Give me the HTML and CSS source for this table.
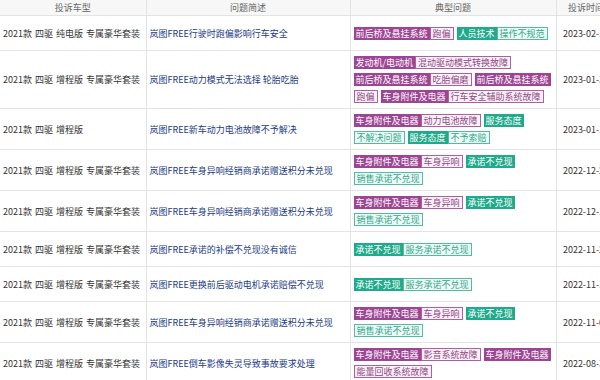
FILE: index.html
```html
<!DOCTYPE html>
<html lang="zh-CN">
<head>
<meta charset="utf-8">
<title>投诉列表</title>
<link rel="stylesheet" href="styles.css">
</head>
<body>
<table class="list">
  <colgroup>
    <col class="c-model"><col class="c-title"><col class="c-issue"><col class="c-date">
  </colgroup>
  <thead>
    <tr><th>投诉车型</th><th>问题简述</th><th>典型问题</th><th>投诉时间</th></tr>
  </thead>
  <tbody>
    <tr>
      <td class="model">2021款 四驱 纯电版 专属豪华套装</td>
      <td class="title">岚图FREE行驶时跑偏影响行车安全</td>
      <td class="issues"><div class="tags"><span class="tag pf">前后桥及悬挂系统</span><span class="tag po">跑偏</span><span class="tag tf">人员技术</span><span class="tag to">操作不规范</span></div></td>
      <td class="date">2023-02-13</td>
    </tr>
    <tr>
      <td class="model">2021款 四驱 增程版 专属豪华套装</td>
      <td class="title">岚图FREE动力模式无法选择 轮胎吃胎</td>
      <td class="issues"><div class="tags"><span class="tag pf">发动机/电动机</span><span class="tag po">混动驱动模式转换故障</span><span class="tag pf">前后桥及悬挂系统</span><span class="tag po">吃胎偏磨</span><span class="tag pf">前后桥及悬挂系统</span><span class="tag po">跑偏</span><span class="tag pf">车身附件及电器</span><span class="tag po">行车安全辅助系统故障</span></div></td>
      <td class="date">2023-01-30</td>
    </tr>
    <tr>
      <td class="model">2021款 四驱 增程版</td>
      <td class="title">岚图FREE新车动力电池故障不予解决</td>
      <td class="issues"><div class="tags"><span class="tag pf">车身附件及电器</span><span class="tag po">动力电池故障</span><span class="tag tf">服务态度</span><span class="tag to">不解决问题</span><span class="tag tf">服务态度</span><span class="tag to">不予索赔</span></div></td>
      <td class="date">2023-01-16</td>
    </tr>
    <tr>
      <td class="model">2021款 四驱 增程版 专属豪华套装</td>
      <td class="title">岚图FREE车身异响经销商承诺赠送积分未兑现</td>
      <td class="issues"><div class="tags"><span class="tag pf">车身附件及电器</span><span class="tag po">车身异响</span><span class="tag tf">承诺不兑现</span><span class="tag to">销售承诺不兑现</span></div></td>
      <td class="date">2022-12-26</td>
    </tr>
    <tr>
      <td class="model">2021款 四驱 增程版 专属豪华套装</td>
      <td class="title">岚图FREE车身异响经销商承诺赠送积分未兑现</td>
      <td class="issues"><div class="tags"><span class="tag pf">车身附件及电器</span><span class="tag po">车身异响</span><span class="tag tf">承诺不兑现</span><span class="tag to">销售承诺不兑现</span></div></td>
      <td class="date">2022-12-19</td>
    </tr>
    <tr>
      <td class="model">2021款 四驱 增程版 专属豪华套装</td>
      <td class="title">岚图FREE承诺的补偿不兑现没有诚信</td>
      <td class="issues"><div class="tags"><span class="tag tf">承诺不兑现</span><span class="tag to">服务承诺不兑现</span></div></td>
      <td class="date">2022-11-28</td>
    </tr>
    <tr>
      <td class="model">2021款 四驱 增程版 专属豪华套装</td>
      <td class="title">岚图FREE更换前后驱动电机承诺赔偿不兑现</td>
      <td class="issues"><div class="tags"><span class="tag tf">承诺不兑现</span><span class="tag to">服务承诺不兑现</span></div></td>
      <td class="date">2022-11-17</td>
    </tr>
    <tr>
      <td class="model">2021款 四驱 增程版 专属豪华套装</td>
      <td class="title">岚图FREE车身异响经销商承诺赠送积分未兑现</td>
      <td class="issues"><div class="tags"><span class="tag pf">车身附件及电器</span><span class="tag po">车身异响</span><span class="tag tf">承诺不兑现</span><span class="tag to">销售承诺不兑现</span></div></td>
      <td class="date">2022-11-07</td>
    </tr>
    <tr>
      <td class="model">2021款 四驱 增程版 专属豪华套装</td>
      <td class="title">岚图FREE倒车影像失灵导致事故要求处理</td>
      <td class="issues"><div class="tags"><span class="tag pf">车身附件及电器</span><span class="tag po">影音系统故障</span><span class="tag pf">车身附件及电器</span><span class="tag po">能量回收系统故障</span></div></td>
      <td class="date">2022-08-31</td>
    </tr>
  </tbody>
</table>
</body>
</html>
```

FILE: styles.css
```css
html, body {
  margin: 0;
  padding: 0;
  background: #ffffff;
  overflow: hidden;
}

body {
  font-family: "Noto Sans CJK SC", "Liberation Sans", sans-serif;
  font-size: 9px;
  color: #333333;
}

.list {
  border-collapse: collapse;
  table-layout: fixed;
  width: 616px;
}

.c-model { width: 146px; }
.c-title { width: 204px; }
.c-issue { width: 206px; }
.c-date { width: 60px; }

.list th {
  height: 15px;
  padding: 0;
  font-weight: normal;
  font-size: 9px;
  line-height: 14px;
  color: #666666;
  background: #f7f7f7;
  text-align: center;
  border-bottom: 1px solid #e3e3e3;
  border-right: 1px solid #e3e3e3;
  white-space: nowrap;
  overflow: hidden;
}

.list td {
  padding: 0 3px;
  vertical-align: middle;
  border-bottom: 1px solid #e3e3e3;
  border-right: 1px solid #e3e3e3;
  white-space: nowrap;
  overflow: hidden;
}

.list tbody tr {
  height: 35px;
}

.list td.model {
  color: #333333;
  word-spacing: 1px;
}

.list td.title {
  color: #1c3b85;
}

.list td.issues {
  padding: 5px 3px 5px;
  white-space: normal;
}

.list td.date {
  text-align: center;
  color: #333333;
  padding: 0 2px;
}

.tags {
  display: flex;
  flex-wrap: wrap;
  row-gap: 4px;
}

.tag {
  display: block;
  height: 13px;
  line-height: 13px;
  padding: 0 2px;
  box-sizing: border-box;
  white-space: nowrap;
  font-size: 9px;
}

.pf {
  background: #9d4494;
  color: #ffffff;
}

.po {
  background: #fcf1f9;
  color: #8c4a83;
  border: 1px solid #ad5ea4;
  line-height: 11px;
  margin-right: 3px;
}

.tf {
  background: #1faa8b;
  color: #ffffff;
}

.to {
  background: #eefaf6;
  color: #34a88b;
  border: 1px solid #52bca2;
  line-height: 11px;
  margin-right: 3px;
}
```
